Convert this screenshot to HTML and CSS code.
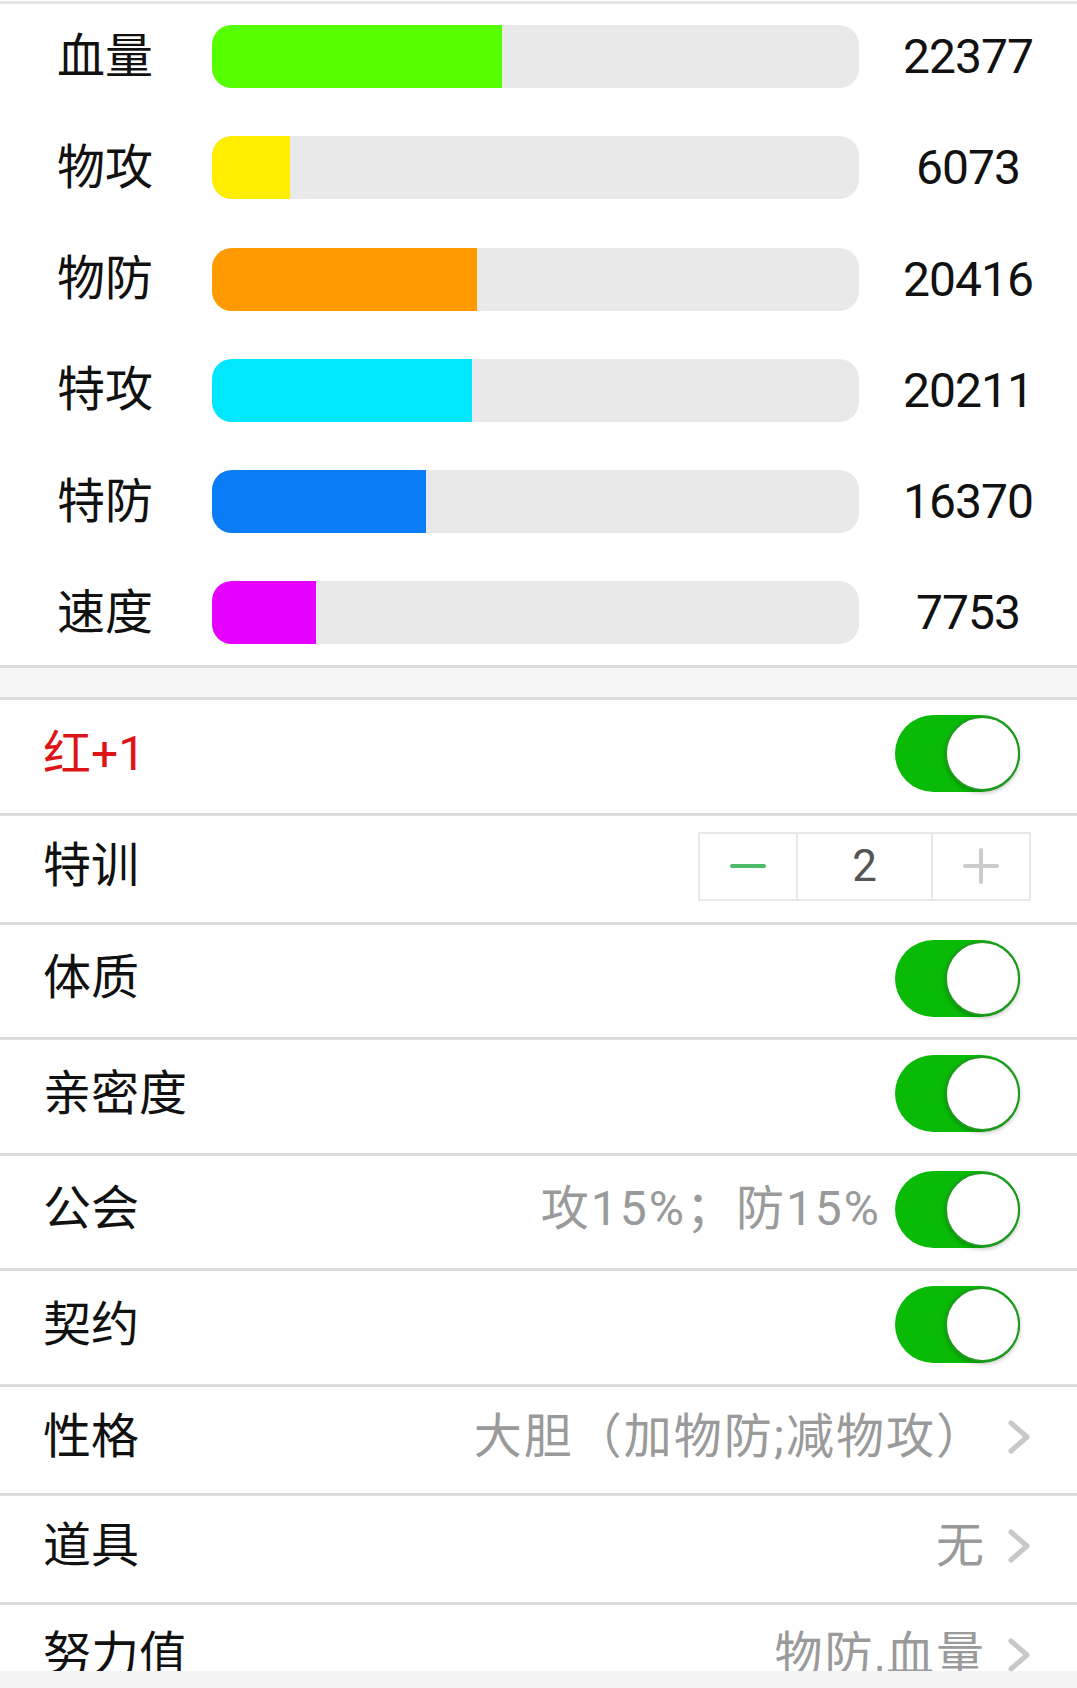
FILE: index.html
```html
<html>
	<head>
		<title> 属性 </title>
		<link rel="stylesheet" href="styles.css">
	</head>
	<body>
		<div class="page">
			<div class="stats">
				<div class="stat-name">血量</div>
				<div class="track"><div class="fill hp" style="width: 44.75%"></div></div>
				<div class="stat-value">22377</div>

				<div class="stat-name">物攻</div>
				<div class="track"><div class="fill atk" style="width: 12.1%"></div></div>
				<div class="stat-value">6073</div>

				<div class="stat-name">物防</div>
				<div class="track"><div class="fill def" style="width: 41%"></div></div>
				<div class="stat-value">20416</div>

				<div class="stat-name">特攻</div>
				<div class="track"><div class="fill satk" style="width: 40.2%"></div></div>
				<div class="stat-value">20211</div>

				<div class="stat-name">特防</div>
				<div class="track"><div class="fill sdef" style="width: 33.1%"></div></div>
				<div class="stat-value">16370</div>

				<div class="stat-name">速度</div>
				<div class="track"><div class="fill spd" style="width: 16.1%"></div></div>
				<div class="stat-value">7753</div>
			</div>

			<div class="band"></div>

			<div class="list">
				<div class="row">
					<div class="label red">红+1</div>
					<div class="switch"></div>
				</div>
				<div class="row">
					<div class="label">特训</div>
					<div class="stepper">
						<div class="step minus"><svg width="36" height="6"><line x1="2" y1="3" x2="34" y2="3" stroke="#4dbb6a" stroke-width="4" stroke-linecap="round"/></svg></div>
						<div class="step count">2</div>
						<div class="step plus"><svg width="36" height="36"><line x1="2" y1="18" x2="34" y2="18" stroke="#cccccc" stroke-width="4" stroke-linecap="round"/><line x1="18" y1="2" x2="18" y2="34" stroke="#cccccc" stroke-width="4" stroke-linecap="round"/></svg></div>
					</div>
				</div>
				<div class="row">
					<div class="label">体质</div>
					<div class="switch"></div>
				</div>
				<div class="row">
					<div class="label">亲密度</div>
					<div class="switch"></div>
				</div>
				<div class="row">
					<div class="label">公会</div>
					<div class="right">
						<span class="value">攻15%；防15%</span>
						<div class="switch"></div>
					</div>
				</div>
				<div class="row">
					<div class="label">契约</div>
					<div class="switch"></div>
				</div>
				<div class="row">
					<div class="label">性格</div>
					<div class="right">
						<span class="value">大胆（加物防;减物攻）</span>
						<svg class="chevron" width="26" height="36"><polyline points="5,4 21,18 5,32" fill="none" stroke="#c8c8c8" stroke-width="5" stroke-linecap="round" stroke-linejoin="round"/></svg>
					</div>
				</div>
				<div class="row">
					<div class="label">道具</div>
					<div class="right">
						<span class="value">无</span>
						<svg class="chevron" width="26" height="36"><polyline points="5,4 21,18 5,32" fill="none" stroke="#c8c8c8" stroke-width="5" stroke-linecap="round" stroke-linejoin="round"/></svg>
					</div>
				</div>
				<div class="row">
					<div class="label">努力值</div>
					<div class="right">
						<span class="value">物防,血量</span>
						<svg class="chevron" width="26" height="36"><polyline points="5,4 21,18 5,32" fill="none" stroke="#c8c8c8" stroke-width="5" stroke-linecap="round" stroke-linejoin="round"/></svg>
					</div>
				</div>
			</div>
		</div>
	</body>
</html>
```

FILE: styles.css
```css
html{
	font-family: Roboto, "Noto Sans CJK SC", sans-serif;
}
body{
	margin: 0;
	background: #f4f4f4;
}
.page{
	height: 1671px;
	overflow: hidden;
	background: white;
	padding-top: 1px;
	box-sizing: border-box;
}
.stats{
	border-top: 3px solid #e6e6e6;
	display: grid;
	grid-template-columns: 155px 647px 218px;
	grid-auto-rows: 63px;
	row-gap: 48.3px;
	padding: 21px 0 21px 57px;
	align-items: center;
}
.stat-name{
	font-size: 48px;
	color: #111;
	line-height: 1;
}
.track{
	height: 63px;
	border-radius: 20px;
	background: #e9e9e9;
	overflow: hidden;
}
.fill{
	height: 100%;
}
.hp{ background: #55ff00; }
.atk{ background: #ffee00; }
.def{ background: #ff9b00; }
.satk{ background: #00e8ff; }
.sdef{ background: #0a7cf5; }
.spd{ background: #e600ff; }
.stat-value{
	text-align: center;
	font-size: 48px;
	letter-spacing: -1px;
	color: #111;
}
.band{
	height: 29px;
	background: #f7f7f7;
	border-top: 3px solid #dcdcdc;
	border-bottom: 3px solid #dcdcdc;
}
.row{
	display: flex;
	align-items: center;
	justify-content: space-between;
	min-height: 70.5px;
	padding: 15px 45px 20.5px 43px;
	border-bottom: 3px solid #dcdcdc;
}
.label{
	font-size: 48px;
	line-height: 1;
	color: #111;
}
.red{
	color: #dd1518;
}
.right{
	display: flex;
	align-items: center;
	gap: 14px;
}
.value{
	font-size: 48px;
	line-height: 1;
	letter-spacing: 2px;
	color: #9a9a9a;
}
.chevron{
	margin-left: 6px;
}
.switch{
	position: relative;
	width: 125px;
	height: 77px;
	border-radius: 39px;
	background: #09bb07;
	margin-right: 12px;
}
.switch::after{
	content: "";
	position: absolute;
	right: 0;
	top: 1px;
	width: 71px;
	height: 71px;
	border-radius: 50%;
	background: white;
	border: 2px solid #1f9a1f;
	box-shadow: 0 2px 4px rgba(0,0,0,0.25);
}
.stepper{
	display: flex;
	height: 69px;
	border: 2px solid #e8e8e8;
	box-sizing: border-box;
	margin-right: 1px;
}
.step{
	display: flex;
	align-items: center;
	justify-content: center;
	width: 96px;
}
.count{
	width: 133px;
	border-left: 2px solid #e8e8e8;
	border-right: 2px solid #e8e8e8;
	font-size: 44px;
	color: #555;
}
```
